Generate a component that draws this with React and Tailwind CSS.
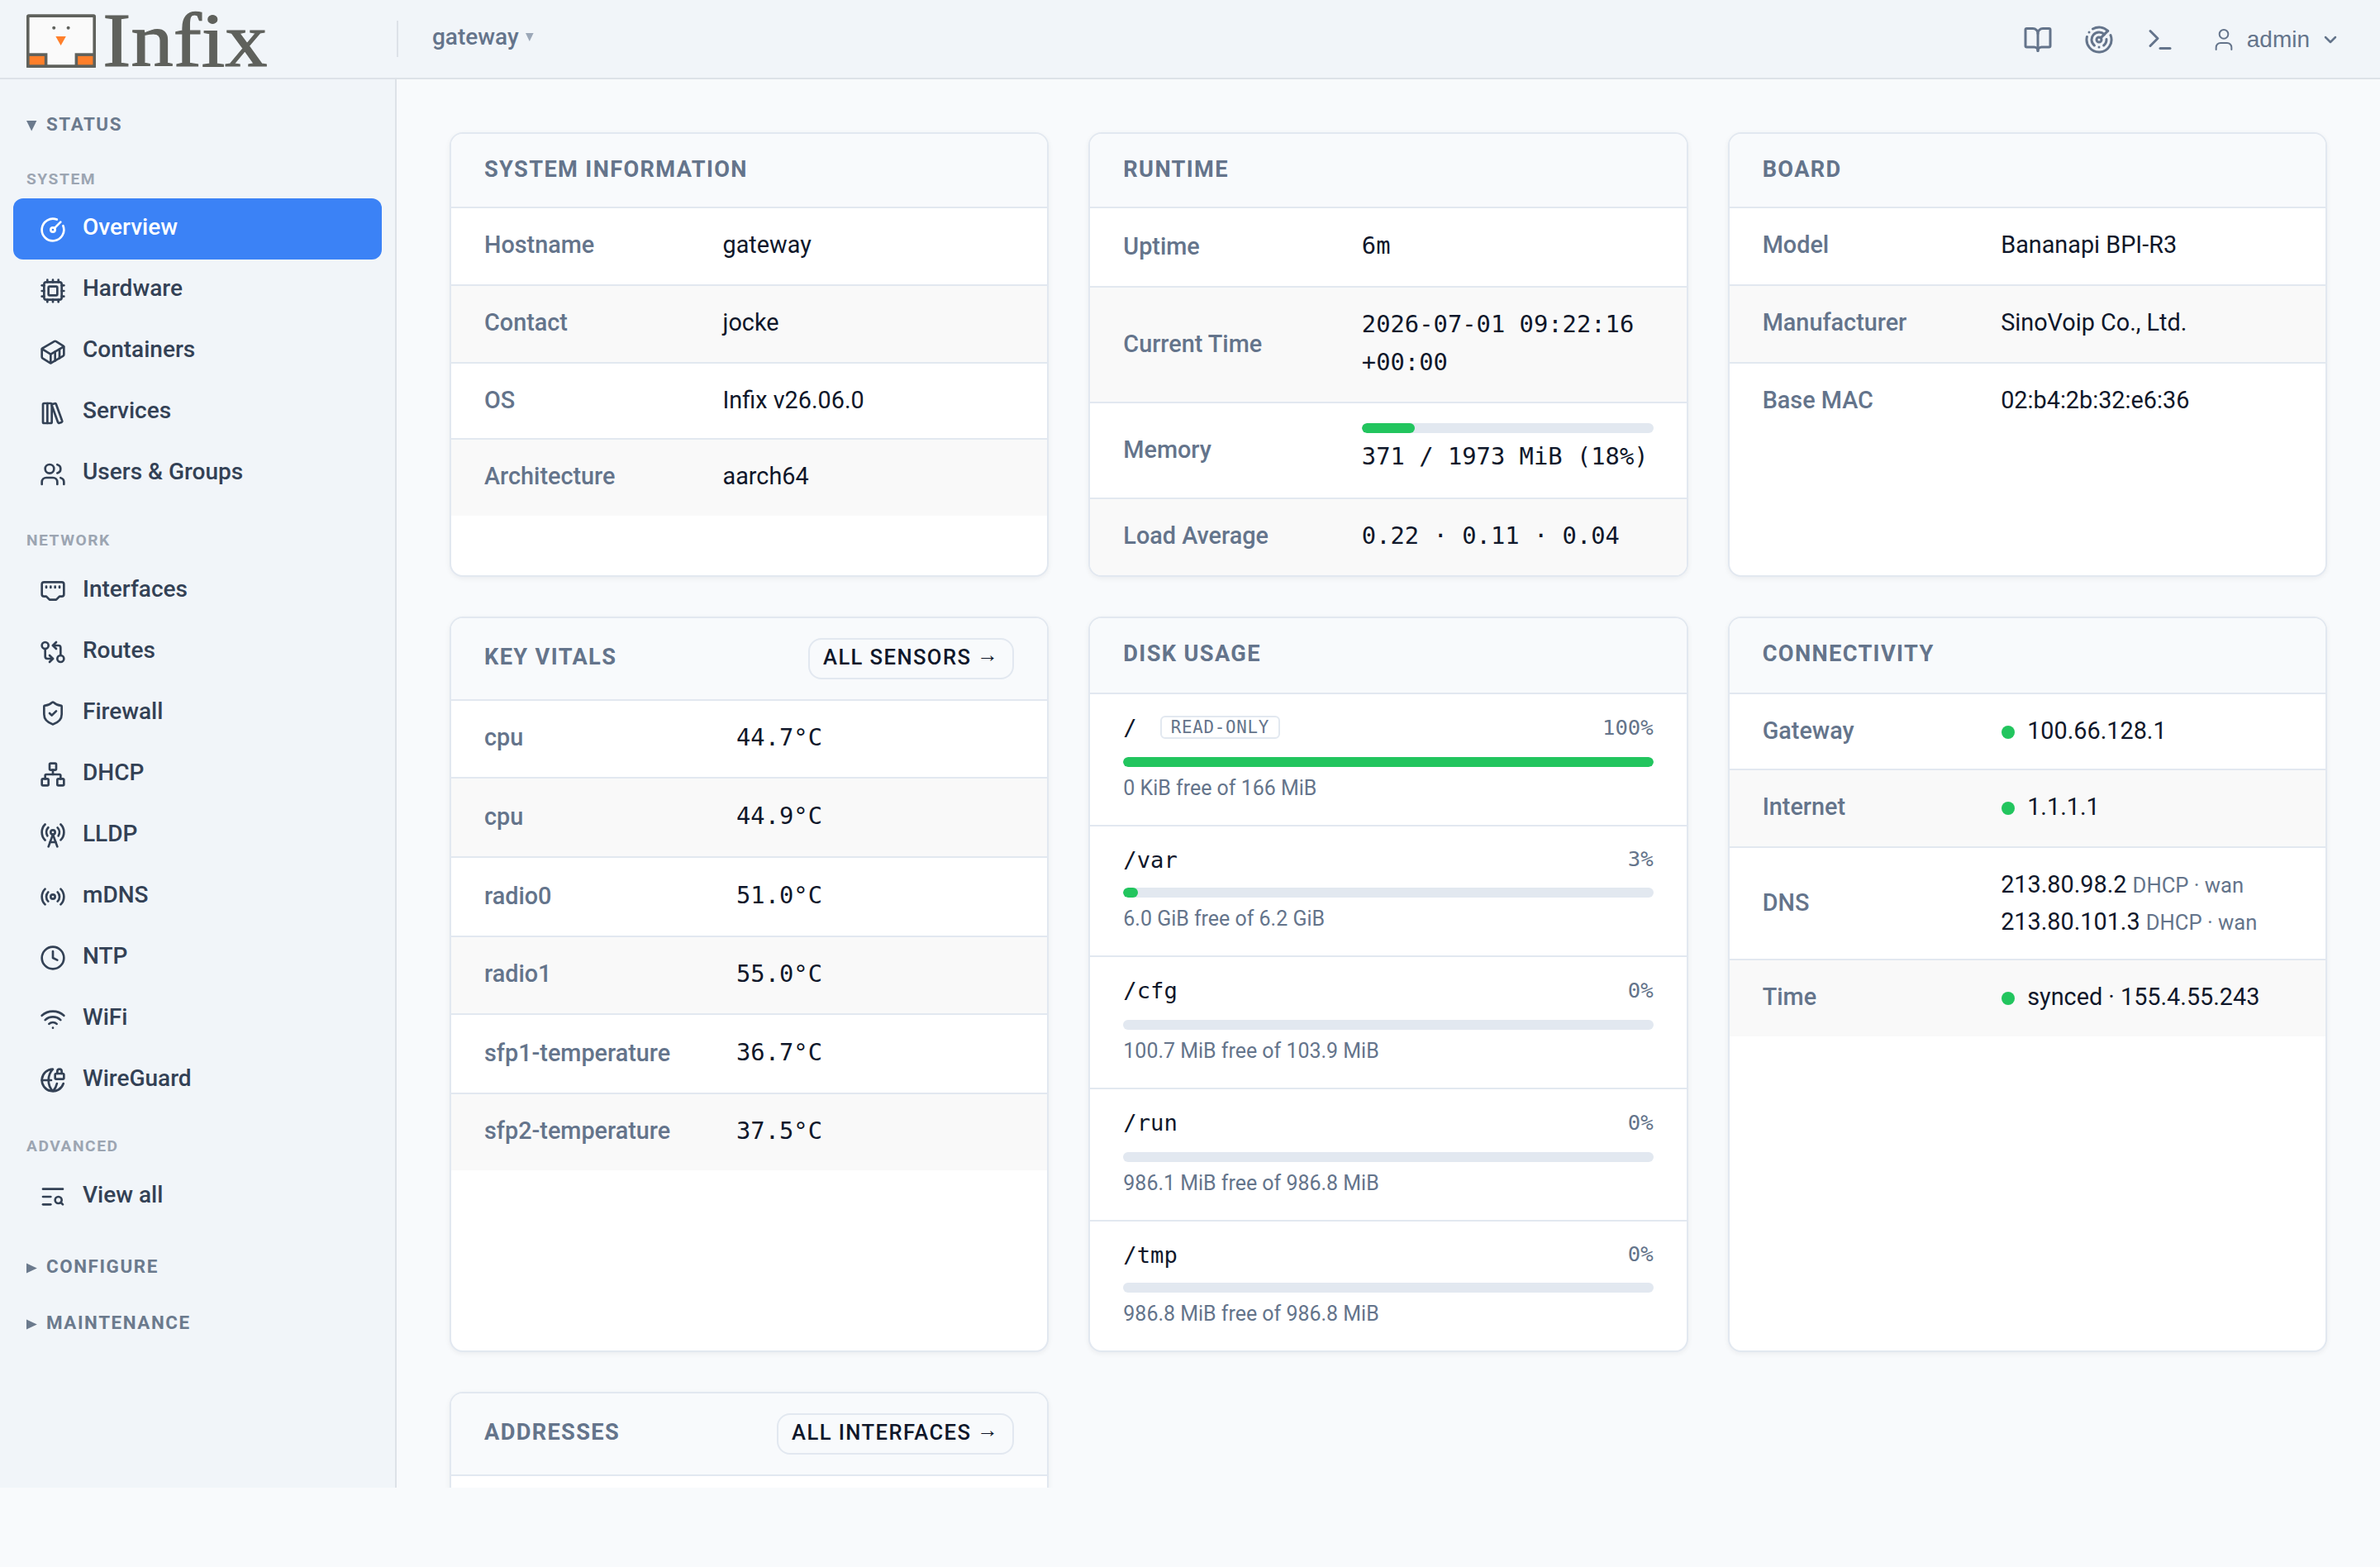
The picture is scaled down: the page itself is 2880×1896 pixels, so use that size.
import React from 'react';
import {
  BookOpen, ChevronDown, CircleGauge, Clock, Container, Cpu, EthernetPort, GitCompareArrows, GlobeLock,
  LibraryBig, Network, Radar, Radio, RadioTower, ShieldCheck, Terminal, TextSearch, User, Users, Wifi,
} from 'lucide-react';

const NAV = [
  {
    label: 'System',
    textPad: 'pb-[5px]',
    items: [
      { icon: CircleGauge, text: 'Overview', active: true },
      { icon: Cpu, text: 'Hardware' },
      { icon: Container, text: 'Containers' },
      { icon: LibraryBig, text: 'Services' },
      { icon: Users, text: 'Users & Groups' },
    ],
  },
  {
    label: 'Network',
    textPad: 'pb-[3px]',
    items: [
      { icon: EthernetPort, text: 'Interfaces' },
      { icon: GitCompareArrows, text: 'Routes' },
      { icon: ShieldCheck, text: 'Firewall' },
      { icon: Network, text: 'DHCP' },
      { icon: RadioTower, text: 'LLDP' },
      { icon: Radio, text: 'mDNS' },
      { icon: Clock, text: 'NTP' },
      { icon: Wifi, text: 'WiFi' },
      { icon: GlobeLock, text: 'WireGuard' },
    ],
  },
  { label: 'Advanced', textPad: 'pb-[2px]', items: [{ icon: TextSearch, text: 'View all' }] },
];

const SENSORS = [
  { name: 'cpu', value: '44.7°C', h: 'h-[94px]', lift: true },
  { name: 'cpu', value: '44.9°C', h: 'h-[96px]' },
  { name: 'radio0', value: '51.0°C', h: 'h-[96px]' },
  { name: 'radio1', value: '55.0°C', h: 'h-[94px]', lift: true },
  { name: 'sfp1-temperature', value: '36.7°C', h: 'h-[96px]' },
  { name: 'sfp2-temperature', value: '37.5°C', h: 'h-[92px]', lift: true },
];

const DISKS = [
  { path: '/', readOnly: true, percent: 100, fill: 100, free: '0 KiB free of 166 MiB', h: 'h-[160px]', head: 'h-[76px]' },
  { path: '/var', percent: 3, fill: 2.8, free: '6.0 GiB free of 6.2 GiB', h: 'h-[158px]', head: 'h-[74px] pt-px' },
  { path: '/cfg', percent: 0, fill: 0, free: '100.7 MiB free of 103.9 MiB', h: 'h-[160px]', head: 'h-[76px]' },
  { path: '/run', percent: 0, fill: 0, free: '986.1 MiB free of 986.8 MiB', h: 'h-[160px]', head: 'h-[76px]' },
  { path: '/tmp', percent: 0, fill: 0, free: '986.8 MiB free of 986.8 MiB', h: 'h-[156px]', head: 'h-[74px] pt-px' },
];

const Logo = () => (
  <svg width="300" height="94" viewBox="0 0 300 94" className="block overflow-visible">
    <rect x="1.8" y="19.1" width="80.4" height="61" rx="1" fill="#fafafa" stroke="#5f615c" strokeWidth="3.6" />
    <rect x="1.8" y="66.1" width="21.8" height="14" fill="#ff7f2a" stroke="#5f615c" strokeWidth="3.6" />
    <rect x="60.4" y="66.1" width="21.8" height="14" fill="#ff7f2a" stroke="#5f615c" strokeWidth="3.6" />
    <circle cx="33.2" cy="33.7" r="2" fill="#5f615c" />
    <circle cx="50.6" cy="33.7" r="2" fill="#5f615c" />
    <path d="M35.4 44h12.4l-6.2 11z" fill="#ff7f2a" />
    <text transform="translate(92.3 80.3) scale(1.09 1)" fontSize="94" fill="#5f615c" stroke="#5f615c" strokeWidth="1.2" className="font-['Liberation_Serif',serif]">Infix</text>
  </svg>
);

const SectionToggle = ({ text, open }) => (
  <div className="flex h-[68px] items-center pl-8">
    <svg width="13" height="13" viewBox="0 0 13 13" className="mt-[4px] mr-[11px]">
      {open ? <path d="M0 0h12.4L6.2 12.6z" fill="#6b7a8d" /> : <path d="M0 .6v11.8L12.8 6.5z" fill="#6b7a8d" />}
    </svg>
    <span className="text-[22.4px] leading-none font-bold tracking-[0.07em] text-[#6b7a8d] uppercase">{text}</span>
  </div>
);

const NavItem = ({ icon: Icon, text, active, textPad }) => (
  <a className={`mx-4 flex h-[74px] items-center gap-5 rounded-xl px-8 ${active ? 'bg-[#3b82f6] text-white' : 'text-[#334155]'}`}>
    <Icon size={32} className="mt-px" />
    <span className={`text-[28px] leading-none font-medium ${textPad}`}>{text}</span>
  </a>
);

const Card = ({ title, action, headH = 'h-[90px] pt-[2px]', children }) => (
  <section className="overflow-hidden rounded-2xl border-2 border-[#e2e8f0] bg-white shadow-[0_2px_6px_rgba(15,23,42,0.06)]">
    <header className={`flex items-center justify-between border-b-2 border-[#e2e8f0] bg-[#f8fafc] px-10 ${headH}`}>
      <h2 className="pb-[3px] text-[27.2px] leading-none font-bold tracking-[0.05em] text-[#64748b] uppercase">{title}</h2>
      {action && (
        <a className="flex h-[50px] items-center gap-[7px] rounded-2xl border-2 border-[#e2e8f0] px-4 text-[25.6px] leading-none font-medium tracking-[0.055em] text-[#0f172a] uppercase">
          <span className="pb-[3px]">{action}</span>
          <span className="pb-[9px] font-normal">→</span>
        </a>
      )}
    </header>
    {children}
  </section>
);

// lift nudges the text of a row up from its centre line
const Row = ({ label, h = 'h-[94px]', labelW = 'w-[40%]', odd, last, mono, lift, children }) => (
  <div className={`flex items-center border-[#e2e8f0] ${h} ${odd ? 'bg-[#f9f9f9]' : ''} ${last ? '' : 'border-b-2'}`}>
    <div className={`shrink-0 pl-10 text-[28.8px] leading-none font-medium text-[#64748b] ${lift ? 'pb-[3px]' : 'pb-[1px]'} ${labelW}`}>{label}</div>
    <div className={`flex-1 pr-10 pl-10 text-[28.8px] leading-[46px] text-[#0f172a] ${mono ? "pb-[5px] font-['DejaVu_Sans_Mono',monospace]" : lift ? 'pb-[4px]' : 'pb-[2px]'}`}>{children}</div>
  </div>
);

const Bar = ({ percent }) => (
  <div className="h-3 overflow-hidden rounded-full bg-[#e2e8f0]">
    <div className="h-full rounded-full bg-[#22c55e]" style={{ width: `${percent}%` }} />
  </div>
);

const Status = ({ children }) => (
  <div className="flex items-center gap-[15px] pl-px">
    <span className="mt-[4px] size-4 rounded-full bg-[#22c55e]" />
    <span>{children}</span>
  </div>
);

const DnsServer = ({ ip }) => (
  <div className="leading-[44px]">
    {ip} <span className="text-[25.6px] text-[#64748b]">DHCP · wan</span>
  </div>
);

const Disk = ({ path, readOnly, percent, fill, free, h, head, last }) => (
  <div className={`border-[#e2e8f0] px-10 ${h} ${last ? '' : 'border-b-2'}`}>
    <div className={`flex items-center font-['DejaVu_Sans_Mono',monospace] leading-none ${head}`}>
      <span className="pt-[6px] text-[27.2px] text-[#0f172a]">{path}</span>
      {readOnly && (
        <span className="mt-[4px] ml-[28px] flex h-7 items-center rounded-md border-2 border-[#e2e8f0] px-[11px] text-[20.8px] tracking-[0.035em] text-[#64748b]">READ-ONLY</span>
      )}
      <span className="ml-auto pt-[5px] text-[25.6px] text-[#64748b]">{percent}%</span>
    </div>
    <Bar percent={fill} />
    <div className="pt-[13px] text-[24.96px] leading-[26px] text-[#64748b]">{free}</div>
  </div>
);

export default function App() {
  return (
    <div className="h-[1896px] w-[2880px] overflow-hidden bg-[#f8fafc] font-['Roboto',sans-serif]">
      <div className="flex h-[1800px] flex-col overflow-hidden">
        {/* Top bar */}
        <header className="flex h-24 shrink-0 items-center border-b-2 border-[#dde2e8] bg-[#f1f5f9] pr-12 pl-8">
          <div className="w-[448px]"><Logo /></div>
          <div className="h-11 w-0.5 bg-[#dde2e8]" />
          <div className="ml-[41px] flex items-center gap-2 pb-[5px] text-[#64748b]">
            <span className="text-[28px] leading-none font-medium">gateway</span>
            <svg width="10" height="10" viewBox="0 0 10 10" className="mt-px"><path d="M0 0h9.6L4.8 10z" fill="#9ca8b8" /></svg>
          </div>
          <div className="ml-auto flex items-center pt-[2px] text-[#64748b]">
            <BookOpen size={36} />
            <Radar size={36} className="ml-[38px]" />
            <Terminal size={36} className="ml-[38px]" />
            <User size={32} strokeWidth={1.5} className="ml-[43px]" />
            <span className="ml-3 font-['Liberation_Sans',sans-serif] text-[28px] leading-none">admin</span>
            <ChevronDown size={24} strokeWidth={2.5} className="ml-[13px]" />
          </div>
        </header>

        <div className="flex min-h-0 flex-1">
          {/* Navigation */}
          <nav className="w-[480px] shrink-0 border-r-2 border-[#dde2e8] bg-[#f1f5f9] pt-[20px]">
            <SectionToggle text="Status" open />
            <div className="pt-[11px]">
              {NAV.map((group, i) => (
                <div key={group.label} className={i ? 'pt-[22px]' : ''}>
                  <div className="flex h-[45px] items-center pb-px pl-8 text-[19.2px] leading-none font-bold tracking-[0.08em] text-[#9ca5b2] uppercase">{group.label}</div>
                  {group.items.map((item) => <NavItem key={item.text} textPad={group.textPad} {...item} />)}
                </div>
              ))}
            </div>
            <div className="pt-[14px]">
              <SectionToggle text="Configure" />
              <SectionToggle text="Maintenance" />
            </div>
          </nav>

          {/* Dashboard cards */}
          <main className="grid flex-1 grid-cols-3 grid-rows-[538px_890px_890px] gap-12 p-16">
            <Card title="System Information">
              <Row label="Hostname" lift>gateway</Row>
              <Row label="Contact" lift odd>jocke</Row>
              <Row label="OS" h="h-[92px]">Infix v26.06.0</Row>
              <Row label="Architecture" h="h-[92px]" lift odd last>aarch64</Row>
            </Card>

            <Card title="Runtime">
              <Row label="Uptime" h="h-[96px]" mono>6m</Row>
              <Row label="Current Time" h="h-[140px]" odd mono>2026-07-01 09:22:16 +00:00</Row>
              <Row label="Memory" h="h-[116px]" mono>
                <div className="pt-[2px]"><Bar percent={18.2} /></div>
                <div className="pt-[5px] whitespace-nowrap">371 / 1973 MiB (18%)</div>
              </Row>
              <Row label="Load Average" h="h-[92px]" lift odd last mono>0.22 · 0.11 · 0.04</Row>
            </Card>

            <Card title="Board">
              <Row label="Model" lift>Bananapi BPI-R3</Row>
              <Row label="Manufacturer" lift odd>SinoVoip Co., Ltd.</Row>
              <Row label="Base MAC" h="h-[92px]" lift last>02:b4:2b:32:e6:36</Row>
            </Card>

            <Card title="Key Vitals" action="All sensors" headH="h-[100px]">
              {SENSORS.map((s, i) => (
                <Row key={i} label={s.name} h={s.h} lift={s.lift} labelW="w-[305px]" odd={i % 2 === 1} last={i === SENSORS.length - 1} mono>{s.value}</Row>
              ))}
            </Card>

            <Card title="Disk Usage" headH="h-[92px]">
              {DISKS.map((d, i) => <Disk key={d.path} {...d} last={i === DISKS.length - 1} />)}
            </Card>

            <Card title="Connectivity" headH="h-[92px]">
              <Row label="Gateway" h="h-[92px]"><Status>100.66.128.1</Status></Row>
              <Row label="Internet" lift odd><Status>1.1.1.1</Status></Row>
              <Row label="DNS" h="h-[136px]">
                <div className="pt-px">
                  <DnsServer ip="213.80.98.2" />
                  <DnsServer ip="213.80.101.3" />
                </div>
              </Row>
              <Row label="Time" h="h-[92px]" lift odd last><Status>synced · 155.4.55.243</Status></Row>
            </Card>

            <Card title="Addresses" action="All interfaces" headH="h-[100px]" />
          </main>
        </div>
      </div>
    </div>
  );
}
